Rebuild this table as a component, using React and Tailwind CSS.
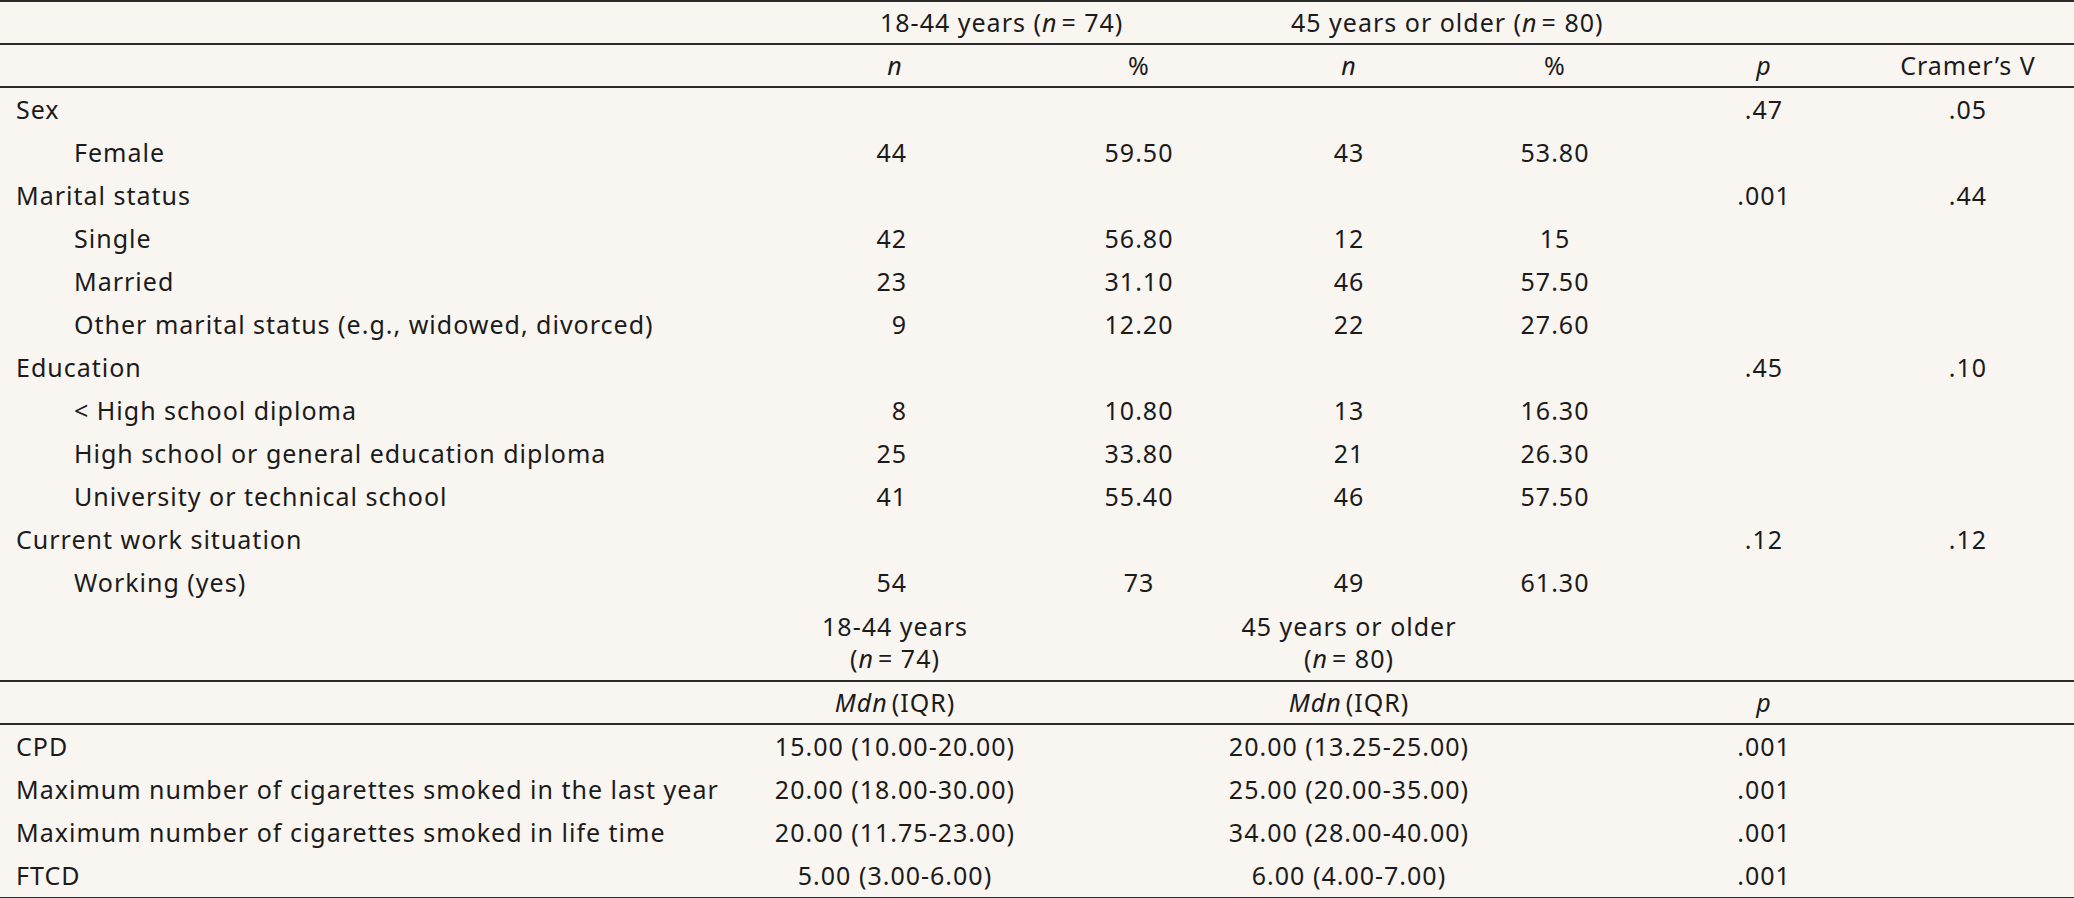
import React from 'react';

const font = "font-['Noto_Sans',_'DejaVu_Sans',_sans-serif] text-[25px] tracking-[0.04em] text-[#1b1b1b]";

// first block: label | n | % | n | % | p | V
const grid1 = 'grid grid-cols-[790px_210px_278px_142px_270px_148px_236px]';
// second block: label | 18-44 | 45+ | p | empty
const grid2 = 'grid grid-cols-[760px_270px_638px_192px_214px]';

const cell = 'flex h-[43px] items-center';

const groups = [
  { label: 'Sex', p: '.47', v: '.05', rows: [['Female', '44', '59.50', '43', '53.80']] },
  {
    label: 'Marital status', p: '.001', v: '.44', rows: [
      ['Single', '42', '56.80', '12', '15'],
      ['Married', '23', '31.10', '46', '57.50'],
      ['Other marital status (e.g., widowed, divorced)', '9', '12.20', '22', '27.60'],
    ],
  },
  {
    label: 'Education', p: '.45', v: '.10', rows: [
      ['< High school diploma', '8', '10.80', '13', '16.30'],
      ['High school or general education diploma', '25', '33.80', '21', '26.30'],
      ['University or technical school', '41', '55.40', '46', '57.50'],
    ],
  },
  { label: 'Current work situation', p: '.12', v: '.12', rows: [['Working (yes)', '54', '73', '49', '61.30']] },
];

const smoking = [
  ['CPD', '15.00 (10.00-20.00)', '20.00 (13.25-25.00)', '.001'],
  ['Maximum number of cigarettes smoked in the last year', '20.00 (18.00-30.00)', '25.00 (20.00-35.00)', '.001'],
  ['Maximum number of cigarettes smoked in life time', '20.00 (11.75-23.00)', '34.00 (28.00-40.00)', '.001'],
  ['FTCD', '5.00 (3.00-6.00)', '6.00 (4.00-7.00)', '.001'],
];

function GroupRows({ g }) {
  return (
    <>
      <div className={grid1}>
        <div className={`${cell} pl-4`}>{g.label}</div>
        <div className={cell} />
        <div className={cell} />
        <div className={cell} />
        <div className={cell} />
        <div className={`${cell} justify-center`}>{g.p}</div>
        <div className={`${cell} justify-center pl-6`}>{g.v}</div>
      </div>
      {g.rows.map(([label, n1, p1, n2, p2]) => (
        <div key={label} className={grid1}>
          <div className={`${cell} pl-[74px] whitespace-nowrap`}>{label}</div>
          <div className={`${cell} justify-end pr-[93px]`}>{n1}</div>
          <div className={`${cell} justify-center`}>{p1}</div>
          <div className={`${cell} justify-center`}>{n2}</div>
          <div className={`${cell} justify-center`}>{p2}</div>
          <div className={cell} />
          <div className={cell} />
        </div>
      ))}
    </>
  );
}

export default function App() {
  return (
    <div className={`min-h-screen w-[2074px] bg-[#f9f5f1] ${font}`}>
      <div className="border-t-2 border-[#2b2b2b]">
        {/* group headings */}
        <div className={`${grid1} border-b-2 border-[#2b2b2b]`}>
          <div className="h-[41px]" />
          <div className="col-span-2 flex h-[41px] items-center pl-[90px] whitespace-nowrap">
            18-44 years (<i className="mr-1">n</i>= 74)
          </div>
          <div className="col-span-2 flex h-[41px] items-center pl-[13px] whitespace-nowrap">
            45 years or older (<i className="mr-1">n</i>= 80)
          </div>
          <div />
          <div />
        </div>
        {/* column headings */}
        <div className={`${grid1} border-b-2 border-[#2b2b2b]`}>
          <div className="h-[41px]" />
          <div className="flex h-[41px] items-center justify-center italic">n</div>
          <div className="flex h-[41px] items-center justify-center">%</div>
          <div className="flex h-[41px] items-center justify-center italic">n</div>
          <div className="flex h-[41px] items-center justify-center">%</div>
          <div className="flex h-[41px] items-center justify-center italic">p</div>
          <div className="flex h-[41px] items-center justify-center pl-6">Cramer’s V</div>
        </div>

        {groups.map((g) => (
          <GroupRows key={g.label} g={g} />
        ))}

        {/* second block headings */}
        <div className={`${grid2} border-b-2 border-[#2b2b2b]`}>
          <div className="h-[76px]" />
          <div className="flex h-[76px] flex-col items-center justify-center leading-[32px]">
            <span>18-44 years</span>
            <span>(<i className="mr-1">n</i>= 74)</span>
          </div>
          <div className="flex h-[76px] flex-col items-center justify-center leading-[32px]">
            <span>45 years or older</span>
            <span>(<i className="mr-1">n</i>= 80)</span>
          </div>
          <div />
          <div />
        </div>
        <div className={`${grid2} border-b-2 border-[#2b2b2b]`}>
          <div className="h-[41px]" />
          <div className="flex h-[41px] items-center justify-center">
            <i className="mr-1">Mdn</i>(IQR)
          </div>
          <div className="flex h-[41px] items-center justify-center">
            <i className="mr-1">Mdn</i>(IQR)
          </div>
          <div className="flex h-[41px] items-center justify-center italic">p</div>
          <div />
        </div>

        <div className="border-b-2 border-[#2b2b2b]">
          {smoking.map(([label, a, b, p]) => (
            <div key={label} className={grid2}>
              <div className={`${cell} pl-4 whitespace-nowrap`}>{label}</div>
              <div className={`${cell} justify-center whitespace-nowrap`}>{a}</div>
              <div className={`${cell} justify-center whitespace-nowrap`}>{b}</div>
              <div className={`${cell} justify-center`}>{p}</div>
              <div className={cell} />
            </div>
          ))}
        </div>
      </div>
    </div>
  );
}
